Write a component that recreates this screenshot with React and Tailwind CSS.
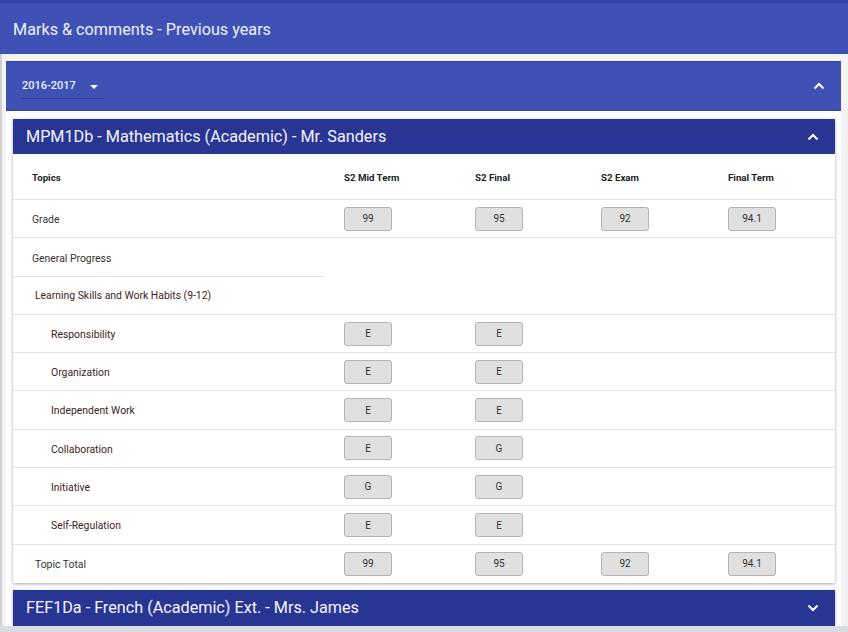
import React from "react";

const Up = ({ cls = "" }) => (
  <svg width="12" height="8" viewBox="0 0 12 8" className={cls}>
    <path d="M1.5 6.5 L6 2 L10.5 6.5" fill="none" stroke="white" strokeWidth="2" />
  </svg>
);
const Down = ({ cls = "" }) => (
  <svg width="12" height="8" viewBox="0 0 12 8" className={cls}>
    <path d="M1.5 1.5 L6 6 L10.5 1.5" fill="none" stroke="white" strokeWidth="2" />
  </svg>
);

const Badge = ({ v }) => (
  <div className="w-[48px] h-[24px] rounded-[3px] border border-[#b3b3b3] bg-[#e0e0e0] flex items-center justify-center text-[10px] text-[#333]">
    {v}
  </div>
);

const cols = "grid grid-cols-[311px_131px_126px_127px_127px]";

const rows = [
  { label: "Grade", pl: "pl-[19px]", vals: ["99", "95", "92", "94.1"] },
  { label: "General Progress", pl: "pl-[19px]", vals: [], partial: true },
  { label: "Learning Skills and Work Habits (9-12)", pl: "pl-[22px]", vals: [], color: "text-[#3b2323]" },
  { label: "Responsibility", pl: "pl-[38px]", vals: ["E", "E"], color: "text-[#3b2323]" },
  { label: "Organization", pl: "pl-[38px]", vals: ["E", "E"], color: "text-[#3b2323]" },
  { label: "Independent Work", pl: "pl-[38px]", vals: ["E", "E"], color: "text-[#3b2323]" },
  { label: "Collaboration", pl: "pl-[38px]", vals: ["E", "G"], color: "text-[#3b2323]" },
  { label: "Initiative", pl: "pl-[38px]", vals: ["G", "G"], color: "text-[#3b2323]" },
  { label: "Self-Regulation", pl: "pl-[38px]", vals: ["E", "E"], color: "text-[#3b2323]" },
  { label: "Topic Total", pl: "pl-[22px]", vals: ["99", "95", "92", "94.1"], last: true },
];

export default function App() {
  return (
    <div
      className="w-[848px] h-[632px] overflow-hidden bg-[#f4f4f4] flex flex-col"
      style={{ fontFamily: "Roboto, 'Noto Sans', sans-serif" }}
    >
      <div className="h-[54px] shrink-0 bg-[#3f51b5] border-t-[3px] border-[#3243a4] flex items-center pl-[13px] pt-[3px]">
        <span className="text-[16.2px] text-[#eef0ff]">Marks &amp; comments - Previous years</span>
      </div>
      <div className="flex-1 flex flex-col pt-[7px] pl-[2px] border-l-[2px] border-[#cfcfcf] min-h-0">
        <div className="w-[835px] ml-[2px] flex-1 bg-white flex flex-col min-h-0">
          <div className="h-[50px] shrink-0 bg-[#3f51b5] border-t border-b border-[#3041a3] flex items-center justify-between pl-[15px] pr-[16px]">
            <div className="w-[83px] h-[24px] mt-[2px] border-b border-[#2c3c9c] flex items-center justify-between pl-[1px] pr-[6px]">
              <span className="text-[11px] text-[#eef0ff] font-medium">2016-2017</span>
              <svg width="8" height="4" viewBox="0 0 8 4"><path d="M0 0 L8 0 L4 4 Z" fill="white" /></svg>
            </div>
            <Up />
          </div>
          <div className="pl-[7px] pt-[8px] flex flex-col gap-[7px]">
            <div className="w-[822px] bg-white shadow-[0_1px_3px_rgba(0,0,0,0.35)]">
              <div className="h-[35px] bg-[#283593] flex items-center justify-between pl-[13px] pr-[16px]">
                <span className="text-[16.2px] text-[#f4f4ff] pt-[2px]">MPM1Db - Mathematics (Academic) - Mr. Sanders</span>
                <Up />
              </div>
              <div className={`${cols} h-[46px] items-center pt-[3px] border-b border-[#e3e3e3] text-[9.7px] font-bold text-[#222]`}>
                <div className="pl-[19px]">Topics</div>
                <div className="pl-[20px]">S2 Mid Term</div>
                <div className="pl-[20px]">S2 Final</div>
                <div className="pl-[20px]">S2 Exam</div>
                <div className="pl-[20px]">Final Term</div>
              </div>
              {rows.map((r, i) => (
                <div
                  key={i}
                  className={`${cols} h-[38.3px] items-center text-[10.4px] ${r.color || "text-[#333]"} ${
                    r.last || r.partial ? "" : "border-b border-[#e3e3e3]"
                  } relative`}
                >
                  <div className={`${r.pl} pt-[2px]`}>{r.label}</div>
                  {[0, 1, 2, 3].map((c) => (
                    <div key={c} className="pl-[20px]">
                      {r.vals[c] ? <Badge v={r.vals[c]} /> : null}
                    </div>
                  ))}
                  {r.partial ? (
                    <div className="absolute left-0 bottom-0 w-[311px] h-px bg-[#e3e3e3]" />
                  ) : null}
                </div>
              ))}
            </div>
            <div className="w-[822px] h-[36px] bg-[#283593] flex items-center justify-between pl-[13px] pr-[16px] shadow-[0_1px_3px_rgba(0,0,0,0.35)]">
              <span className="text-[16.2px] text-[#f4f4ff] pt-[1px]">FEF1Da - French (Academic) Ext. - Mrs. James</span>
              <Down />
            </div>
          </div>
        </div>
      </div>
      <div className="h-[6px] shrink-0 bg-[#d9dcdf]" />
    </div>
  );
}
